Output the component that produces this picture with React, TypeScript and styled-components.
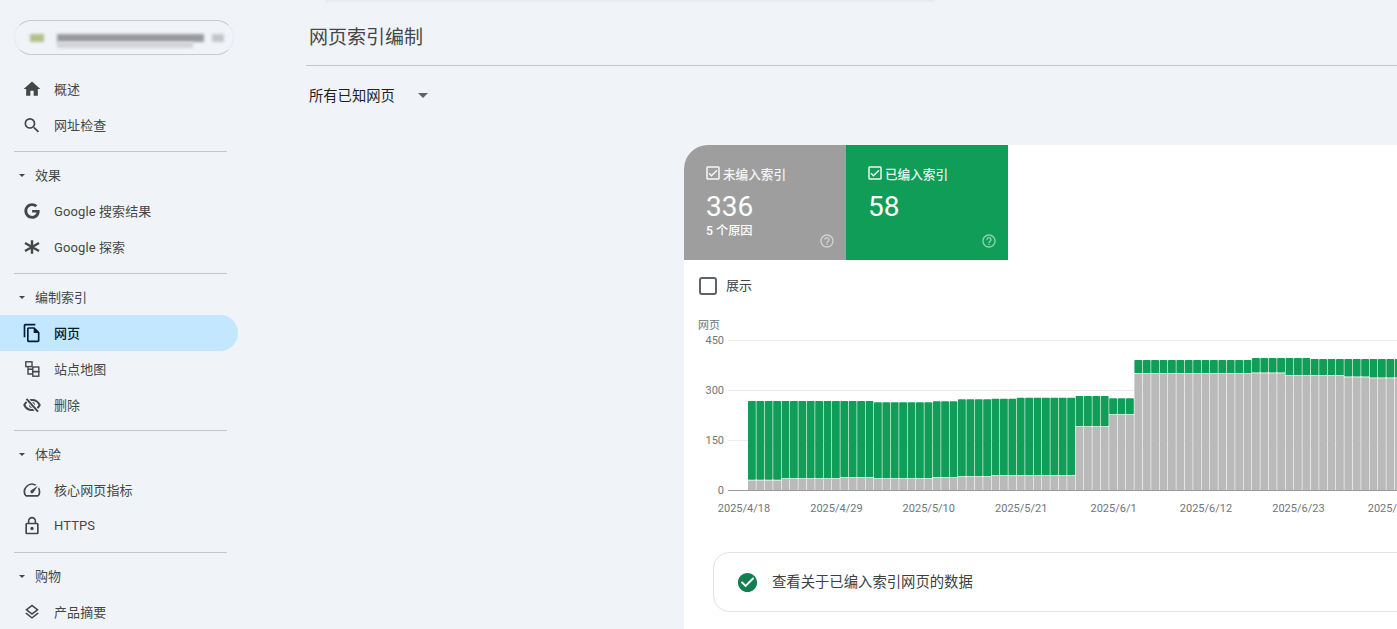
import React, { FunctionComponent, ReactNode } from "react";
import styled, { createGlobalStyle } from "styled-components";
import { FaGoogle } from "react-icons/fa";
import {
  MdArrowDropDown,
  MdCheckCircle,
  MdHelpOutline,
  MdHome,
  MdLockOutline,
  MdOutlineCheckBox,
  MdOutlineFileCopy,
  MdOutlineLayers,
  MdOutlineSpeed,
  MdSearch,
} from "react-icons/md";

const FONT = `Roboto, "Noto Sans CJK SC", "Noto Sans", sans-serif`;

const GlobalStyle = createGlobalStyle`
  html, body {
    margin: 0;
    padding: 0;
    height: 100%;
    background: #f0f4f9;
    font-family: ${FONT};
    overflow: hidden;
  }
`;

const AsteriskIcon = () => (
  <svg width="20" height="20" viewBox="0 0 20 20" fill="none" stroke="currentColor" strokeWidth="2.4">
    <path d="M10 3.2v13.6M3 6l14 8M17 6L3 14" />
  </svg>
);

const SitemapIcon = () => (
  <svg width="20" height="20" viewBox="0 0 20 20" fill="none" stroke="currentColor" strokeWidth="1.4">
    <rect x="3.8" y="2.8" width="6.2" height="4.8" />
    <rect x="10.8" y="8" width="6" height="4.6" />
    <rect x="10.8" y="12.6" width="6" height="4.6" />
    <path d="M6 7.6V15h4.8M6 10.3h4.8" />
  </svg>
);

const EyeOffIcon = () => (
  <svg width="20" height="20" viewBox="0 0 20 20" fill="none" stroke="currentColor" strokeWidth="2">
    <path d="M2.3 10C3.8 6.8 6.7 5 10 5s6.200 1.800 7.700 5c-1.500 3.200-4.400 5-7.700 5s-6.200-1.800-7.700-5Z" />
    <circle cx="10" cy="10" r="2" />
    <path d="M4.500 3.800l11.500 12.800" stroke="#f0f4f9" strokeWidth="4" />
    <path d="M4.500 3.800l11.500 12.800" />
  </svg>
);

// [bars, total height, grey height] in chart px, 150px = 450 pages
const BAR_GROUPS: [number, number, number][] = [
  [4, 89, 9.5],
  [7, 89, 11],
  [4, 89, 12],
  [7, 87.8, 11],
  [3, 88.7, 12],
  [4, 90.7, 13],
  [3, 91.3, 14],
  [7, 92.3, 14],
  [4, 94, 63],
  [3, 91.7, 75],
  [14, 130, 116],
  [4, 132, 116.7],
  [3, 132, 114],
  [4, 131, 114],
  [3, 131, 112.7],
  [12, 131, 111.7],
];

const BAR_START = 748;
const BAR_PITCH = 8.4;
const BASELINE = 490;

const bars = BAR_GROUPS.flatMap(([count, total, grey]) =>
  Array.from({ length: count }, () => ({ total, grey }))
);

const Y_TICKS = [
  { label: "450", y: 340 },
  { label: "300", y: 390 },
  { label: "150", y: 440 },
];

const X_TICKS = [
  "2025/4/18",
  "2025/4/29",
  "2025/5/10",
  "2025/5/21",
  "2025/6/1",
  "2025/6/12",
  "2025/6/23",
  "2025/7/4",
];

const IndexChart: FunctionComponent = () => (
  <ChartSvg viewBox="684 316 800 200" width="800" height="200">
    <AxisText x="698" y="329">
      网页
    </AxisText>
    {Y_TICKS.map((tick) => (
      <g key={tick.label}>
        <line x1="728" x2="1484" y1={tick.y + 0.5} y2={tick.y + 0.5} stroke="#ececec" />
        <AxisText x="724" y={tick.y + 4} textAnchor="end">
          {tick.label}
        </AxisText>
      </g>
    ))}
    <AxisText x="724" y={BASELINE + 4} textAnchor="end">
      0
    </AxisText>
    <line x1="728" x2="1484" y1={BASELINE + 0.5} y2={BASELINE + 0.5} stroke="#9a9a9a" />
    {bars.map((bar, i) => {
      const x = BAR_START + i * BAR_PITCH;
      const width = BAR_PITCH - 0.6;
      return (
        <g key={i}>
          <rect
            x={x}
            y={BASELINE - bar.total}
            width={width}
            height={bar.total - bar.grey - 0.8}
            rx="0.8"
            fill="#0f9d58"
          />
          <rect x={x} y={BASELINE - bar.grey} width={width} height={bar.grey} fill="#bababa" />
        </g>
      );
    })}
    {X_TICKS.map((label, i) => (
      <AxisText key={label} x={744 + i * 92.4} y="512" textAnchor="middle">
        {label}
      </AxisText>
    ))}
  </ChartSvg>
);

interface NavItemProps {
  icon: ReactNode;
  label: string;
  active?: boolean;
}

const NavItem: FunctionComponent<NavItemProps> = ({ icon, label, active }) => (
  <NavRow $active={active}>
    <NavIcon>{icon}</NavIcon>
    {label}
  </NavRow>
);

const SectionHead: FunctionComponent<{ label: string }> = ({ label }) => (
  <SectionRow>
    <SectionCaret />
    {label}
  </SectionRow>
);

export default function App() {
  return (
    <Page>
      <GlobalStyle />
      <Sidebar>
        <SiteSelector>
          <BlurBlock $width={14} $color="#b4bf8a" />
          <BlurText>
            <BlurBar $width={147} $height={8} $color="#9a9a9e" />
            <BlurBar $width={136} $height={6} $color="#d2d3d8" />
          </BlurText>
          <BlurBlock $width={12} $color="#c4c5c9" />
        </SiteSelector>
        <NavItem icon={<MdHome size={20} />} label="概述" />
        <NavItem icon={<MdSearch size={21} />} label="网址检查" />
        <NavDivider />
        <SectionHead label="效果" />
        <NavItem icon={<FaGoogle size={16} />} label="Google 搜索结果" />
        <NavItem icon={<AsteriskIcon />} label="Google 探索" />
        <NavDivider />
        <SectionHead label="编制索引" />
        <NavItem icon={<MdOutlineFileCopy size={20} />} label="网页" active />
        <NavItem icon={<SitemapIcon />} label="站点地图" />
        <NavItem icon={<EyeOffIcon />} label="删除" />
        <NavDivider $tight />
        <SectionHead label="体验" />
        <NavItem icon={<MdOutlineSpeed size={20} />} label="核心网页指标" />
        <NavItem icon={<MdLockOutline size={24} />} label="HTTPS" />
        <NavDivider />
        <SectionHead label="购物" />
        <NavItem icon={<MdOutlineLayers size={18} />} label="产品摘要" />
      </Sidebar>
      <Main>
        <SearchEdge />
        <TitleBar>网页索引编制</TitleBar>
        <FilterRow>
          所有已知网页
          <FilterCaret />
        </FilterRow>
        <Card>
          <Tiles>
            <Tile $color="#9e9e9e">
              <TileLabel>
                <MdOutlineCheckBox size={18} />
                未编入索引
              </TileLabel>
              <TileValue>336</TileValue>
              <TileNote>5 个原因</TileNote>
              <TileHelp>
                <MdHelpOutline size={16} />
              </TileHelp>
            </Tile>
            <Tile $color="#0f9d58">
              <TileLabel>
                <MdOutlineCheckBox size={18} />
                已编入索引
              </TileLabel>
              <TileValue>58</TileValue>
              <TileHelp>
                <MdHelpOutline size={16} />
              </TileHelp>
            </Tile>
          </Tiles>
          <ShowRow>
            <ShowBox />
            <ShowLabel>展示</ShowLabel>
          </ShowRow>
          <IndexChart />
          <Callout>
            <CalloutIcon>
              <MdCheckCircle size={23} />
            </CalloutIcon>
            <CalloutText>查看关于已编入索引网页的数据</CalloutText>
          </Callout>
        </Card>
      </Main>
    </Page>
  );
}

const Page = styled.div`
  display: flex;
  width: 1397px;
  height: 629px;
  overflow: hidden;
  background: #f0f4f9;
`;

const Sidebar = styled.nav`
  flex: 0 0 238px;
  margin-right: 68px;
  padding-top: 20px;
  color: #444746;
  font-size: 13px;
`;

const SiteSelector = styled.div`
  display: flex;
  align-items: center;
  gap: 13px;
  box-sizing: border-box;
  width: 220px;
  height: 35px;
  margin: 0 0 16px 14px;
  padding: 0 10px 0 15px;
  border: 1px solid #c6c8cb;
  border-left-color: #e6e9ed;
  border-right-color: #e6e9ed;
  border-radius: 18px;
`;

const BlurBlock = styled.span<{ $width: number; $color: string }>`
  flex: none;
  width: ${(p) => p.$width}px;
  height: 8px;
  background: ${(p) => p.$color};
  filter: blur(1.8px);
`;

const BlurText = styled.div`
  display: flex;
  flex-direction: column;
  margin-right: -5px;
  margin-top: 6px;
`;

const BlurBar = styled.span<{ $width: number; $height: number; $color: string }>`
  display: block;
  width: ${(p) => p.$width}px;
  height: ${(p) => p.$height}px;
  background: ${(p) => p.$color};
  filter: blur(1.8px);
`;

const NavRow = styled.div<{ $active?: boolean }>`
  display: flex;
  align-items: center;
  box-sizing: border-box;
  height: 36px;
  padding: 0 0 2px 22px;
  border-radius: 0 18px 18px 0;
  background: ${(p) => (p.$active ? "#c2e7ff" : "transparent")};
  color: ${(p) => (p.$active ? "#001d35" : "#444746")};
  font-weight: ${(p) => (p.$active ? 500 : 400)};
  letter-spacing: 0.1px;
`;

const NavIcon = styled.span`
  display: flex;
  align-items: center;
  justify-content: center;
  width: 20px;
  margin: 2px 12px 0 0;
`;

const NavDivider = styled.div<{ $tight?: boolean }>`
  width: 213px;
  height: 1px;
  margin: ${(p) => (p.$tight ? 7 : 8)}px 0 5px 14px;
  background: #c4c7c9;
`;

const SectionRow = styled.div`
  display: flex;
  align-items: center;
  box-sizing: border-box;
  height: 36px;
  padding: 0 0 2px 19px;
`;

const SectionCaret = styled.span`
  width: 0;
  height: 0;
  margin: 2px 10px 0 0;
  border-top: 3.5px solid #444746;
  border-left: 3.5px solid transparent;
  border-right: 3.5px solid transparent;
`;

const Main = styled.main`
  flex: 1;
  min-width: 0;
  color: #444746;
`;

const SearchEdge = styled.div`
  width: 610px;
  height: 2px;
  margin-left: 19px;
  background: #e8ecf1;
`;

const TitleBar = styled.div`
  display: flex;
  align-items: center;
  box-sizing: border-box;
  height: 64px;
  padding: 4px 0 0 3px;
  border-bottom: 1px solid #c4c7c9;
  font-size: 19px;
`;

const FilterRow = styled.div`
  display: flex;
  align-items: center;
  box-sizing: border-box;
  height: 60px;
  padding: 0 0 3px 3px;
  color: #1f1f1f;
  font-size: 14.3px;
`;

const FilterCaret = styled(MdArrowDropDown).attrs({ size: 24 })`
  margin-left: 16px;
  color: #5f6368;
`;

const Card = styled.section`
  width: 900px;
  height: 500px;
  margin: 19px 0 0 378px;
  border-top-left-radius: 24px;
  background: #fff;
  overflow: hidden;
`;

const Tiles = styled.div`
  display: flex;
`;

const Tile = styled.div<{ $color: string }>`
  position: relative;
  box-sizing: border-box;
  width: 162px;
  height: 115px;
  padding: 20px 11px 0 22px;
  background: ${(p) => p.$color};
  color: #fff;
`;

const TileLabel = styled.div`
  display: flex;
  align-items: center;
  gap: 1px;
  margin-left: -2px;
  height: 16px;
  font-size: 12.6px;
  font-weight: 500;
  color: rgba(255, 255, 255, 0.92);
`;

const TileValue = styled.div`
  margin-top: 10px;
  height: 32px;
  font-size: 28px;
  line-height: 32px;
`;

const TileNote = styled.div`
  font-size: 12.2px;
  line-height: 16px;
  font-weight: 500;
`;

const TileHelp = styled.span`
  position: absolute;
  right: 11px;
  bottom: 11px;
  display: flex;
  color: rgba(255, 255, 255, 0.55);
`;

const ShowRow = styled.div`
  display: flex;
  align-items: center;
  height: 52px;
  padding-left: 15px;
  color: #3c4043;
  font-size: 13px;
`;

const ShowBox = styled.span`
  box-sizing: border-box;
  width: 18px;
  height: 18px;
  margin-right: 9px;
  border: 2px solid #5f6368;
  border-radius: 3px;
`;

const ShowLabel = styled.span`
  margin-top: -3px;
`;

const ChartSvg = styled.svg`
  display: block;
  margin-top: 4px;
`;

const AxisText = styled.text`
  fill: #70757a;
  font-family: ${FONT};
  font-size: 11px;
`;

const Callout = styled.div`
  display: flex;
  align-items: center;
  box-sizing: border-box;
  width: 800px;
  height: 60px;
  margin: 36px 0 0 29px;
  padding-left: 22px;
  border: 1px solid #e3e3e3;
  border-radius: 16px;
  color: #3c4043;
  font-size: 14.35px;
`;

const CalloutIcon = styled.span`
  display: flex;
  margin-right: 13px;
  color: #137e4f;
`;

const CalloutText = styled.span`
  margin-top: -3px;
`;
